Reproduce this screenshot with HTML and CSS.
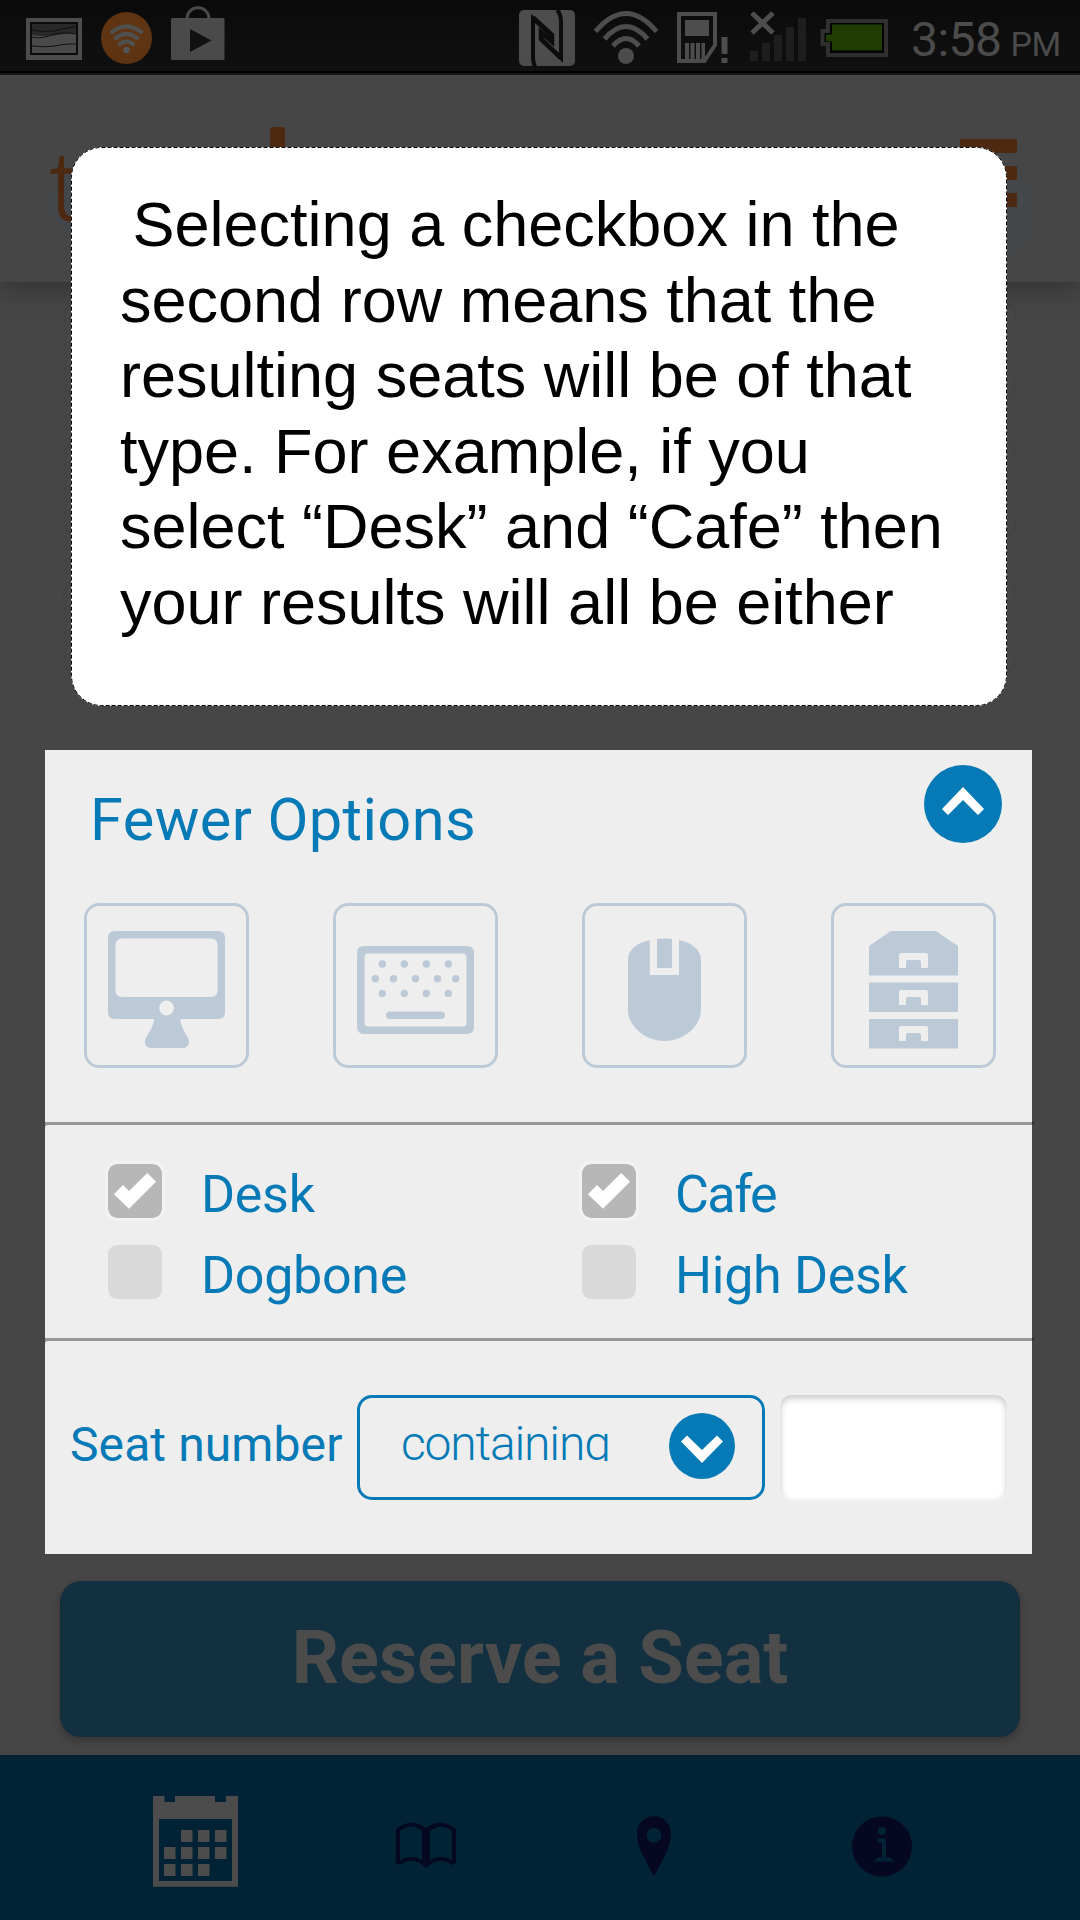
FILE: index.html
```html
<!DOCTYPE html>
<html lang="en">
<head>
<meta charset="utf-8">
<title>Reserve a Seat</title>
<link rel="stylesheet" href="styles.css">
</head>
<body>
<div class="screen">
  <div class="status">
    <svg class="status-left" width="230" height="71" viewBox="0 0 230 71">
      <path fill="#4d4d4d" d="M26 18h56v42H26z"/>
      <path fill="#0c0c0c" d="M30 22h48v33H30z"/>
      <path fill="#4a4a4a" d="M32 24h44v29H32z"/>
      <path fill="#292929" d="M32 24h44v9c-14 0-25 5-44 2z"/>
      <path fill="none" stroke="#101010" d="M32 30c12 2 22 2 30-1 5-1 9-1 14-3M32 37c8 2 13 0 20-2 10-3 17-2 24-1M32 46c13 1 19 1 28-1 6-1 10-1 16-1"/>
      <ellipse cx="126.500" cy="38" rx="25.500" ry="26" fill="#5f3413"/>
      <g fill="none" stroke="#50504f" stroke-width="4.500" stroke-linecap="round"><path d="M112 32q14.500-11 29 0M116 38q10.500-8 21 0M120 44q6.500-5 13 0"/></g>
      <circle cx="126.500" cy="50" r="3.200" fill="#555"/>
      <rect x="171" y="18" width="53.500" height="42" rx="1.500" fill="#4a4a4a"/>
      <path fill="none" stroke="#4a4a4a" stroke-width="3" d="M187 19c0-15 22-15 22 0"/>
      <path fill="#111" d="M190 29l21.500 11.500L190 52z"/>
    </svg>
    <svg class="status-right" width="386" height="71" viewBox="510 0 386 71">
      <rect x="519" y="10" width="56" height="56" rx="5" fill="#4d4d4d"/>
      <path fill="none" stroke="#0c0c0c" stroke-width="4" d="M535 67q-2-4-2-10V18.500L553 37M557 10q4 4 4 12v36L541 39"/>
      <path fill="none" stroke="#0c0c0c" stroke-width="4.500" d="M533 17.500L552 35v7l-11-10v7l20 19"/>
      <g fill="none" stroke="#4d4d4d" stroke-width="5"><path d="M595.500 31.500q30.500-36 61 0M604.500 39q21.500-25 43 0M613 46q13-15 26 0"/></g>
      <circle cx="626" cy="56" r="8" fill="#4d4d4d"/>
      <path fill="none" stroke="#4d4d4d" stroke-width="4" d="M679 14h36v31l-10.500 16H679z"/>
      <path fill="#4d4d4d" d="M685 20h24v16h-24zM685 43h4v18h-4zM690.500 43h4v18h-4zM696 43h4v18h-4zM701.500 43h3.500v18h-3.500zM721.500 37h6v17h-6zM721.500 58h6v5h-6z"/>
      <path fill="none" stroke="#4d4d4d" stroke-width="5" d="M752 13l21 20M773 13l-21 20"/>
      <path fill="#1e1e1e" d="M750 51h8v10h-8zM762 43h8v18h-8zM774 35h8v26h-8zM786 27h8v34h-8zM798 18h8v43h-8z"/>
      <path fill="#030303" stroke="#303030" stroke-width="4" d="M828 21h58v34h-58V44h-5.500V31h5.500z"/>
      <path fill="#1f3d02" d="M832 24.500h50v26h-50v-9h-6v-7h6z"/>
    </svg>
    <div class="clock"><span class="time">3:58</span><span class="meridiem">PM</span></div>
  </div>

  <header class="header">
    <i class="halo halo-left"></i>
    <i class="halo halo-right"></i>
    <div class="logo"><span class="logo-letter">t</span><i class="logo-bar"></i></div>
    <div class="menu"><i></i><i></i><i></i></div>
  </header>

  <main class="main">
    <div class="fields"><div class="field"></div><div class="field"></div><div class="field"></div></div>

    <section class="panel">
      <div class="options">
        <div class="options-head">
          <h2>Fewer Options</h2>
          <svg width="78" height="78" viewBox="0 0 78 78"><circle cx="39" cy="39" r="39" fill="#057ab6"/><path fill="#fff" d="M39 22l21 22-6 6-15-15-15 15-6-6z"/></svg>
        </div>
        <div class="tiles">
          <svg class="tile" viewBox="3 3 159 159">
            <path fill-rule="evenodd" d="M31 28h103q7 0 7 7v74q0 7-7 7H96q1 8 8 19c3 6-1 10-6 10H67c-5 0-8-5-5-10 7-12 8-15 8-19H31q-7 0-7-7V35q0-7 7-7zM38 35.500q-6.500 0-6.500 6.500v45.500q0 6.500 6.500 6.500h89q6.500 0 6.500-6.500V42q0-6.500-6.500-6.500z"/>
            <circle class="hole" cx="82.500" cy="105" r="7.400"/>
          </svg>
          <svg class="tile" viewBox="3 3 159 159">
            <path fill-rule="evenodd" d="M31 43h103q7 0 7 7v74q0 7-7 7H31q-7 0-7-7V50q0-7 7-7zM35 50.500q-3.500 0-3.500 3.500v66q0 3.500 3.500 3.500h95q3.500 0 3.500-3.500V54q0-3.500-3.500-3.500z"/>
            <g><circle cx="49.300" cy="61" r="3.700"/><circle cx="71.300" cy="61" r="3.700"/><circle cx="93.300" cy="61" r="3.700"/><circle cx="115.300" cy="61" r="3.700"/><circle cx="42.300" cy="75.700" r="3.700"/><circle cx="60.500" cy="75.700" r="3.700"/><circle cx="82.500" cy="75.700" r="3.700"/><circle cx="104.500" cy="75.700" r="3.700"/><circle cx="122.700" cy="75.700" r="3.700"/><circle cx="49.300" cy="90.400" r="3.700"/><circle cx="71.300" cy="90.400" r="3.700"/><circle cx="93.300" cy="90.400" r="3.700"/><circle cx="115.300" cy="90.400" r="3.700"/></g>
            <rect x="53" y="108.500" width="59" height="7.500" rx="3.700"/>
          </svg>
          <svg class="tile" viewBox="3 3 159 159">
            <path d="M46 57C46 47 55 39.500 67.800 37.300V72H97V37.300C110 39.500 119 47 119 57v50c0 16-17 31-36.500 31S46 123 46 107z"/>
            <path d="M75 36q7.500-1 15 0v29H75z"/>
          </svg>
          <svg class="tile" viewBox="3 3 159 159">
            <path d="M60 28h45l22 15v29.500H38V43zM38 79.500h89V109H38zM38 116h89v29.500H38z"/>
            <path class="hole" d="M70 50h25q2 0 2 2v13h-7v-6q0-2-2-2H77q-2 0-2 2v6h-7V52q0-2 2-2zM70 87h25q2 0 2 2v13h-7v-6q0-2-2-2H77q-2 0-2 2v6h-7V89q0-2 2-2zM70 123h25q2 0 2 2v13h-7v-6q0-2-2-2H77q-2 0-2 2v6h-7v-13q0-2 2-2z"/>
          </svg>
        </div>
      </div>

      <div class="divided">
        <div class="types">
          <div class="check"><span class="box checked"><svg width="54" height="54"><path fill="#fff" d="M6 30.300L15 21l6 6L39.300 9l8.700 8.700-27 27z"/></svg></span><span>Desk</span></div>
          <div class="check"><span class="box checked"><svg width="54" height="54"><path fill="#fff" d="M6 30.300L15 21l6 6L39.300 9l8.700 8.700-27 27z"/></svg></span><span class="narrow">Cafe</span></div>
          <div class="check"><span class="box"></span><span>Dogbone</span></div>
          <div class="check"><span class="box"></span><span>High Desk</span></div>
        </div>
      </div>

      <div class="divided">
        <div class="number-row">
          <span class="number-label">Seat number</span>
          <div class="select">
            <span class="select-value">containing</span>
            <svg width="66" height="66" viewBox="0 0 66 66"><circle cx="33" cy="33" r="33" fill="#057ab6"/><path fill="#fff" d="M33 50L12 28.500l6-6 15 14.500 15-14.500 6 6z"/></svg>
          </div>
          <div class="input"></div>
        </div>
      </div>
    </section>

    <div class="reserve"><span>Reserve a Seat</span></div>
  </main>

  <nav class="nav">
    <svg width="96" height="100" viewBox="150 1796 96 100">
      <path fill="#4c4c4c" fill-rule="evenodd" d="M153 1796h11.500v6H175v-6h40v6h11v-6h12v90.700h-85zM159 1819v62h73v-62z"/>
      <path fill="#4c4c4c" d="M181 1830h11.500v12H181zM198 1830h11.500v12H198zM215 1830h11.500v12H215zM164 1847h11.500v12H164zM181 1847h11.500v12H181zM198 1847h11.500v12H198zM215 1847h11.500v12H215zM164 1864h11.500v12H164zM181 1864h11.500v12H181zM198 1864h11.500v12H198z"/>
    </svg>
    <svg width="60" height="60" viewBox="396 1816 60 60">
      <path fill="#050820" fill-rule="evenodd" d="M396 1829q15-12 30-1 15-11 30 1v34l-4 2q-13-10-26 3-13-13-26-3l-4-2zM400 1831v29q12-6 22 0v-29q-11-9-22 0zM430 1831v29q11-6 22 0v-29q-11-9-22 0z"/>
    </svg>
    <svg width="60" height="60" viewBox="624 1815.500 60 60">
      <path fill="#050820" fill-rule="evenodd" d="M654 1815.700c9.500 0 17 7.500 17 17 0 14-8 25-15.500 40.500q-1.500 4-3 0C645 1858 637 1847 637 1832.700c0-9.500 7.500-17 17-17zm0 11.500a7.500 7.500 0 1 0 0 15 7.500 7.500 0 0 0 0-15z"/>
    </svg>
    <svg width="60" height="61" viewBox="852 1815.500 60 61">
      <circle cx="882" cy="1846" r="30" fill="#050820"/>
      <circle cx="882" cy="1830.500" r="4" fill="#022335"/>
      <path fill="#022335" d="M876.500 1838h9.500v19h3.500l5.500 4h-22l5.500-4h3.500v-15h-3.500z"/>
    </svg>
  </nav>

  <div class="tip">
    <svg class="tip-outline" width="936" height="559"><rect x=".5" y=".5" width="935" height="558" rx="30" fill="none" stroke="#000" stroke-dasharray="4 2"/></svg>
    <p><span class="lead">&nbsp;</span>Selecting a checkbox in the<br>second row means that the<br>resulting seats will be of that<br>type. For example, if you<br>select “Desk” and “Cafe” then<br>your results will all be either</p>
  </div>
</div>
</body>
</html>
```

FILE: styles.css
```css
* { box-sizing: border-box; }
body { margin: 0; background: #464646; font-family: Roboto, sans-serif; }
svg { display: block; flex: none; }
h2, p { margin: 0; font-weight: 400; }

.screen {
  position: relative;
  display: flex;
  flex-direction: column;
  width: 1080px;
  height: 1920px;
  overflow: hidden;
  background: #464646;
}

.status {
  display: flex;
  height: 75px;
  background: linear-gradient(#0a0a0a, #111 71px, #020202 71px, #020202 73px, #191919 73px);
}
.status-right { margin-left: 280px; }
.clock { display: flex; align-items: baseline; padding: 12px 0 0 15px; color: #4b4b4b; white-space: nowrap; }
.time { font-size: 48px; line-height: 56px; letter-spacing: -0.5px; }
.meridiem { margin-left: 9px; font-size: 34px; letter-spacing: -.5px; }

.header {
  position: relative;
  display: flex;
  justify-content: space-between;
  height: 207px;
  padding: 0 63px 0 50px;
  background: #464646;
  box-shadow: 0 8px 26px rgba(0, 0, 0, .28);
}
.halo { position: absolute; border-radius: 50%; background: #44474a; }
.halo-left { left: 50px; top: 92px; width: 90px; height: 75px; }
.halo-right { right: 45px; top: 88px; width: 96px; height: 98px; }
.logo { position: relative; display: flex; gap: 185px; color: #4d2912; }
.logo-letter { width: 35px; font: 300 95px/130px "Open Sans", sans-serif; padding-top: 43px; -webkit-text-stroke: 1.500px #4d2912; }
.logo-bar { width: 15px; height: 92px; margin-top: 52px; border-radius: 3px; background: #4d2912; }
.menu { position: relative; display: flex; flex-direction: column; gap: 13px; padding-top: 64px; }
.menu i { width: 57px; height: 14px; border-radius: 1px; background: #4d2912; }

.main { display: flex; flex-direction: column; height: 1473px; }
.fields { display: flex; flex-direction: column; gap: 42px; height: 468px; padding: 19px 63px 0; }
.field { height: 97px; border: 2px solid #434343; border-radius: 16px; }

.panel { width: 987px; height: 804px; margin-left: 45px; background: #eee; color: #057ab6; }
.options { height: 372px; padding: 15px 30px 0 39px; }
.options-head { display: flex; justify-content: space-between; height: 138px; }
.options-head h2 { padding: 21px 0 0 6px; font-size: 59.500px; line-height: 69px; letter-spacing: .4px; }
.tiles { display: grid; grid-template-columns: repeat(4, 165px); gap: 84px; }
.tile { width: 165px; height: 165px; border: 3px solid #bccad7; border-radius: 15px; fill: #bccad7; }
.hole { fill: #eee; }

.divided { position: relative; padding-top: 3px; background: #979797; }
.divided::after {
  content: "";
  position: absolute;
  left: 100%;
  top: 0;
  width: 3px;
  height: 3px;
  background: #292929;
  clip-path: polygon(0 0, 100% 0, 0 100%);
}
.types {
  display: grid;
  grid-template-columns: 474px 1fr;
  grid-auto-rows: 81px;
  height: 213px;
  padding: 39px 0 0 63px;
  border-top-left-radius: 3px;
  background: #eee;
}
.check { display: flex; gap: 39px; font-size: 52px; line-height: 61px; letter-spacing: -.3px; }
.check span:last-child { white-space: nowrap; }
.narrow { letter-spacing: -1.500px; }
.box { width: 54px; height: 54px; border-radius: 9px; background: #d9d9d9; }
.checked { background: #b7b7b7; outline: 3px solid #f2f2f2; }

.number-row {
  display: flex;
  height: 213px;
  padding: 54px 24px 0 25px;
  border-top-left-radius: 3px;
  background: #eee;
}
.number-label { width: 287px; padding-top: 21px; font-size: 48px; line-height: 58px; letter-spacing: .1px; white-space: nowrap; }
.select {
  display: flex;
  align-items: center;
  justify-content: space-between;
  width: 408px;
  height: 105px;
  padding: 0 27px 3px 41px;
  border: 3px solid #057ab6;
  border-radius: 15px;
}
.select-value {
  align-self: flex-start;
  height: 42px;
  margin-top: 21px;
  overflow: hidden;
  font-size: 48px;
  font-weight: 300;
  line-height: 50px;
  letter-spacing: -1.150px;
}
.input {
  width: 227px;
  height: 105px;
  margin-left: 15px;
  border-radius: 12px;
  background: #fff;
  box-shadow: inset 0 3px 7px rgba(0, 0, 0, .22), 0 0 0 2px #f0f0f0;
}

.reserve {
  display: flex;
  justify-content: center;
  width: 960px;
  height: 156px;
  margin: 27px 60px 0;
  border-radius: 21px;
  background: #123040;
  box-shadow: 0 4px 8px rgba(0, 0, 0, .25);
  color: #4c4c4c;
  font-size: 74px;
  font-weight: 700;
  line-height: 154px;
}

.nav {
  display: grid;
  grid-template-columns: repeat(4, 228px);
  align-items: center;
  justify-items: center;
  height: 165px;
  padding: 17px 84px 0;
  background: #022335;
}

.tip {
  position: absolute;
  left: 71px;
  top: 147px;
  width: 936px;
  height: 559px;
  padding: 40px 0 0 49px;
  border-radius: 31px;
  background: #fff;
  color: #000;
  font-family: "Liberation Sans", Arial, sans-serif;
  font-size: 63px;
  line-height: 75.500px;
  white-space: nowrap;
}
.tip-outline { position: absolute; left: 0; top: 0; }
.lead { letter-spacing: -5px; }
```
